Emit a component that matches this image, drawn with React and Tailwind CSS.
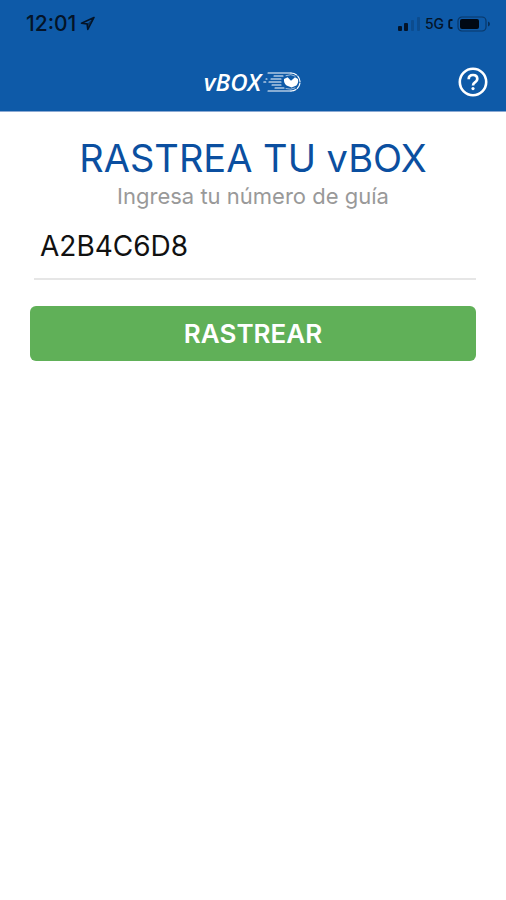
function StatusBar() {
  return (
    <div className="flex h-12 items-center justify-between pr-[15px] pl-[26px] text-[#041428]">
      <div className="flex items-center gap-1">
        <span className="text-[21px] font-medium">12:01</span>
        <svg width="15" height="17" viewBox="0 0 15 17" fill="none" aria-hidden="true">
          <path d="M14 1.5 1.5 7.2l5.6.7.7 5.6z" stroke="currentColor" strokeWidth="1.6" strokeLinejoin="round" />
          <path d="M14 1.5 7.1 7.9l.7 5.6z" fill="currentColor" opacity="0.6" />
        </svg>
      </div>
      <div className="flex items-center gap-1">
        <svg width="23" height="16" viewBox="0 0 23 16" fill="currentColor" aria-hidden="true">
          <rect x="0" y="10" width="4" height="5" rx="1" />
          <rect x="6" y="7" width="4" height="8" rx="1" />
          <rect x="13" y="4" width="3" height="11" rx="1" opacity="0.2" />
          <rect x="19" y="1" width="3" height="14" rx="1" opacity="0.2" />
        </svg>
        <span className="text-sm font-medium">5G</span>
        <svg width="5" height="10" viewBox="0 0 5 10" fill="none" aria-hidden="true">
          <path d="M4.5 1H3Q1.2 1 1.2 2.8v4.4Q1.2 9 3 9h1.5" stroke="currentColor" strokeWidth="1.8" />
        </svg>
        <svg width="34" height="16" viewBox="0 0 34 16" aria-hidden="true">
          <rect x="1" y="1" width="28" height="14" rx="4" fill="none" stroke="currentColor" strokeWidth="1.2" opacity="0.5" />
          <rect x="3" y="3" width="19" height="10" rx="2" fill="#000814" />
          <path d="M31 5.5q2 .8 2 2.5t-2 2.5z" fill="currentColor" opacity="0.6" />
        </svg>
      </div>
    </div>
  );
}

function Logo() {
  return (
    <div className="flex items-center gap-0.5 text-white">
      <span className="font-['Open_Sans',sans-serif] text-2xl font-semibold italic">vBOX</span>
      <svg width="39" height="22" viewBox="0 0 39 22" fill="none" aria-hidden="true">
        <g stroke="currentColor" strokeLinecap="round">
          <path d="M5 2h23M11 5h9M3 8h1M8 8h10M0.8 11h2M6 11h12M9 14h9M12 17h9M5 20h23" strokeWidth="1.1" />
          <path d="M28 2a9 9 0 0 1 0 18" strokeWidth="1.2" strokeDasharray="6 1.6" />
          <path d="M23 4.6q5-2.2 9 .4M23 17.6q5 1.6 9-.6" strokeWidth="1" opacity="0.6" />
        </g>
        <path d="m21 8 3.6-1.8 3.4 3.6 4-3.6L35 8q.8 4-1.6 6.4L28.6 16.6l-5-2Q20.6 12 21 8z" fill="currentColor" />
      </svg>
    </div>
  );
}

function Header() {
  return (
    <header className="border-b border-[#8ba9d3] bg-[#0e5aa8]">
      <StatusBar />
      <div className="grid h-[63px] grid-cols-[1fr_auto_1fr] items-center px-[18px] pt-1">
        <div className="col-start-2">
          <Logo />
        </div>
        <button type="button" aria-label="Ayuda" className="justify-self-end text-white">
          <svg width="30" height="30" viewBox="0 0 30 30" fill="none" stroke="currentColor" aria-hidden="true">
            <circle cx="15" cy="15" r="13.2" strokeWidth="2.6" />
            <path d="M10.7 12.2q0-4.2 4.3-4.2t4.3 3.9q0 1.7-2.1 3.3-2.2 1.5-2.2 3.3" strokeWidth="2.7" />
            <circle cx="15" cy="21.6" r="1.6" fill="currentColor" stroke="none" />
          </svg>
        </button>
      </div>
    </header>
  );
}

export default function App() {
  return (
    <div className="min-h-screen bg-white font-['Inter',sans-serif]">
      <Header />
      <main className="px-[30px] pt-6">
        <h1 className="text-center text-[38px] leading-[44px] text-[#0b4fa0]">RASTREA TU vBOX</h1>
        <form onSubmit={(e) => e.preventDefault()}>
          <label htmlFor="guia" className="block text-center text-[22px] leading-8 text-[#999999]">
            Ingresa tu número de guía
          </label>
          <div className="pl-1">
            <input
              id="guia"
              type="text"
              defaultValue="A2B4C6D8"
              className="block h-[68px] w-full border-b-2 border-[#e6e6e6] px-1.5 pt-0.5 text-[28px] text-[#111111] outline-none"
            />
          </div>
          <button
            type="submit"
            className="mt-[26px] h-[55px] w-full rounded-md bg-[#60b058] text-[26px] font-semibold text-white"
          >
            RASTREAR
          </button>
        </form>
      </main>
    </div>
  );
}
